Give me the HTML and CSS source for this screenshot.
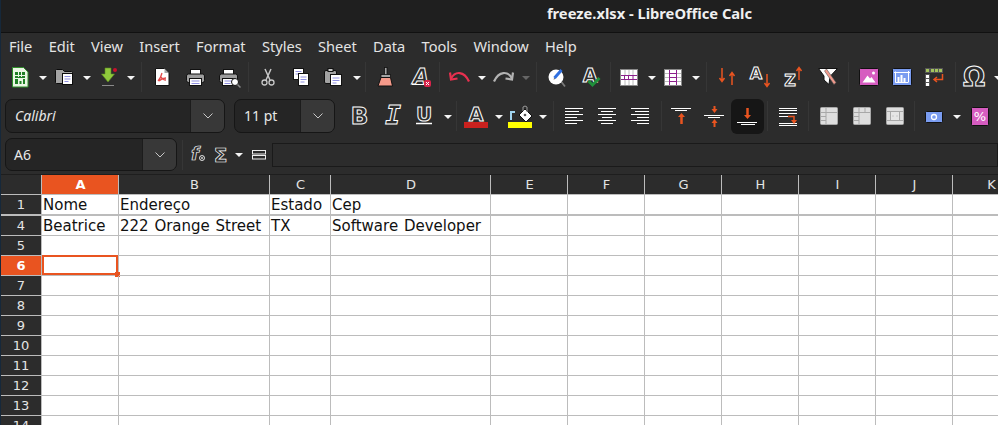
FILE: index.html
```html
<!DOCTYPE html>
<html lang="en">
<head>
  <meta charset="UTF-8">
  <meta name="viewport" content="width=device-width, initial-scale=1.0">
  <title>freeze.xlsx - LibreOffice Calc</title>
  <link rel="stylesheet" href="styles.css">
</head>
<body>

  <div class="titlebar">freeze.xlsx - LibreOffice Calc</div>

  <div class="menubar">
    <span>File</span><span>Edit</span><span>View</span><span>Insert</span><span>Format</span><span>Styles</span><span>Sheet</span><span>Data</span><span>Tools</span><span>Window</span><span>Help</span>
  </div>

  <!-- standard toolbar -->
  <div class="toolbar row1">
    <span class="btn"><svg class="ic" viewBox="0 0 33 26"><path d="M8.500 3.500h11l4.500 4.500v15h-15.500z" fill="#eaf6e4" stroke="#2f8f2a"/><rect x="11" y="8" width="10" height="12" fill="#1f7f24"/><path d="M11 11.500h10M11 14.500h10M14.500 8v5M17.500 8v5" stroke="#eaf6e4"/><rect x="14" y="15" width="5" height="5" fill="#eaf6e4"/><rect x="15.500" y="17" width="2" height="3" fill="#1f7f24"/></svg></span>
    <span class="drop"></span>
    <span class="btn"><svg class="ic" viewBox="0 0 33 26"><path d="M7.500 6.500q0-1 1-1h6l2 2h7q1 0 1 1v10q0 1-1 1h-15q-1 0-1-1z" fill="#a3a3a3" stroke="#0c0c0c"/><rect x="14.500" y="9.500" width="10" height="11" fill="#fff" stroke="#0c0c0c"/><path d="M16.500 12.500h6M16.500 15h6M16.500 17.500h4" stroke="#8f8fe0"/></svg></span>
    <span class="drop"></span>
    <span class="btn"><svg class="ic" viewBox="0 0 33 26"><path d="M13 4h6v6h3.500l-6.500 8-6.500-8h3.500z" fill="#8fc83c" stroke="#5c8a20" stroke-width=".6"/><path d="M10 21.500h12" stroke="#8a8a8a"/><circle cx="23" cy="6" r="2" fill="#c8102e"/></svg></span>
    <span class="drop"></span>
    <i class="sep wide"></i>
    <span class="btn"><svg class="ic" viewBox="0 0 33 26"><path d="M9.500 4.500h9l4.500 4.500v12.500h-13.500z" fill="#fff" stroke="#111"/><path d="M18.500 4.500v4.500h4.500z" fill="#a8a8a8"/><path d="M16 9c-1 4-3 7-4 8m3-4c1 2 3 3 5 3m-7 1c2-2 5-3 7-3" fill="none" stroke="#e34b4b" stroke-width="1.300"/></svg></span>
    <span class="btn"><svg class="ic" viewBox="0 0 33 26"><rect x="11.500" y="5.500" width="10" height="6" fill="#fff" stroke="#111"/><rect x="7.500" y="10" width="18" height="8.500" rx="2" fill="#9d9d9d" stroke="#111"/><rect x="10.500" y="14.500" width="12" height="7" fill="#fff" stroke="#111"/><path d="M12.500 17h8M12.500 19.500h8" stroke="#8f8fe0"/></svg></span>
    <span class="btn"><svg class="ic" viewBox="0 0 33 26"><rect x="11.500" y="5.500" width="10" height="6" fill="#fff" stroke="#111"/><rect x="7.500" y="10" width="18" height="8.500" rx="2" fill="#9d9d9d" stroke="#111"/><rect x="10.500" y="14.500" width="12" height="7" fill="#fff" stroke="#111"/><path d="M12.500 17h8M12.500 19.500h6" stroke="#8f8fe0"/><circle cx="23" cy="18" r="3.500" fill="#fff" stroke="#111"/><path d="M25.500 20.500l3 3" stroke="#8a8a8a" stroke-width="1.500"/></svg></span>
    <i class="sep"></i>
    <span class="btn"><svg class="ic" viewBox="0 0 33 26"><path d="M13 5l5 11M19 5l-5 11" stroke="#c8c8c8" stroke-width="1.500" fill="none"/><circle cx="12.500" cy="18.500" r="2.500" fill="none" stroke="#c8c8c8" stroke-width="1.300"/><circle cx="19.500" cy="18.500" r="2.500" fill="none" stroke="#c8c8c8" stroke-width="1.300"/></svg></span>
    <span class="btn"><svg class="ic" viewBox="0 0 33 26"><rect x="8.500" y="4.500" width="10" height="11" fill="#fff" stroke="#111"/><path d="M10.500 7.500h6M10.500 10h3" stroke="#8f8fe0"/><rect x="13.500" y="9.500" width="10" height="12" fill="#fff" stroke="#111"/><path d="M15.500 13h6M15.500 15.500h6M15.500 18h4" stroke="#8f8fe0"/></svg></span>
    <span class="btn"><svg class="ic" viewBox="0 0 33 26"><rect x="6.500" y="6.500" width="12" height="13" rx="1.500" fill="#a3a3a3" stroke="#111"/><rect x="10" y="4.500" width="5" height="3" fill="#c8c8c8" stroke="#111"/><rect x="12.500" y="10.500" width="11" height="11" fill="#fff" stroke="#111"/><path d="M14.500 14h7M14.500 16.500h7M14.500 19h4" stroke="#8f8fe0"/></svg></span>
    <span class="drop"></span>
    <i class="sep"></i>
    <span class="btn"><svg class="ic" viewBox="0 0 33 26"><rect x="15.500" y="3.500" width="2.500" height="8" fill="#a3a3a3" stroke="#111" stroke-width=".8"/><rect x="12" y="10.500" width="9.500" height="3" fill="#a3a3a3" stroke="#111" stroke-width=".8"/><path d="M12 13.500h9.500l2 8.500h-14.500z" fill="#f59a8a" stroke="#111"/></svg></span>
    <span class="btn"><svg class="ic" viewBox="0 0 33 26"><text class="ol ital" x="19" y="20" font-size="21">A</text><path d="M10 20.500h14" stroke="#fff"/><rect x="22" y="16" width="7" height="7" rx="2" fill="#d9234a"/><path d="M24 18l3 3m0-3l-3 3" stroke="#fff"/></svg></span>
    <i class="sep mid"></i>
    <span class="btn"><svg class="ic" viewBox="0 0 33 26"><path d="M8 14.500c4-7.500 13-8 18 3" fill="none" stroke="#e8304f" stroke-width="2.200"/><path d="M7 8.500l1 7 6.500-1" fill="none" stroke="#e8304f" stroke-width="2.200"/></svg></span>
    <span class="drop"></span>
    <span class="btn"><svg class="ic" viewBox="0 0 33 26"><path d="M25 14.500c-4-7.500-13-8-18 3" fill="none" stroke="#b3b3b3" stroke-width="2.200"/><path d="M26 8.500l-1 7-6.500-1" fill="none" stroke="#b3b3b3" stroke-width="2.200"/></svg></span>
    <span class="drop off"></span>
    <i class="sep wide"></i>
    <span class="btn"><svg class="ic" viewBox="0 0 33 26"><path d="M20.500 18l3.500 4.500" stroke="#7a7a7a" stroke-width="1.800"/><circle cx="15" cy="13" r="7.500" fill="#fff"/><path d="M13.500 14l7-8" stroke="#2f6fe0" stroke-width="3"/><path d="M12.500 15.500l.7-1.500 1 1z" fill="#333"/></svg></span>
    <span class="btn"><svg class="ic" viewBox="0 0 33 26"><text class="ol" x="16" y="18" font-size="19">A</text><path d="M14.500 17l4 4 7-7" fill="none" stroke="#1f8f3a" stroke-width="3"/></svg></span>
    <i class="sep narrow"></i>
    <span class="btn"><svg class="ic" viewBox="0 0 33 26"><rect x="7.500" y="5.500" width="17" height="16" fill="#fff" stroke="#8a8a8a"/><path d="M12 6v5M16 6v5M20 6v5M12 16v5M16 16v5M20 16v5" stroke="#bcbcbc"/><path d="M8 11.500h16M8 15.500h16M11.500 11v5M15.500 11v5M20 11v5" stroke="#8c1f8c"/></svg></span>
    <span class="drop"></span>
    <span class="btn"><svg class="ic" viewBox="0 0 33 26"><rect x="7.500" y="5.500" width="17" height="16" fill="#fff" stroke="#8a8a8a"/><path d="M8 9.500h16M8 13.500h16M8 17.500h16" stroke="#bcbcbc"/><path d="M12.500 6v15M19.500 6v15M13 9.500h6M13 13.500h6M13 17.500h6" stroke="#8c1f8c"/></svg></span>
    <span class="drop"></span>
    <i class="sep wide"></i>
    <span class="btn"><svg class="ic" viewBox="0 0 33 26"><path d="M11 4v13M8.500 14l2.500 3.500 2.500-3.500M21 21v-12M18.500 12l2.500-3.500 2.500 3.500" fill="none" stroke="#e95420" stroke-width="1.500"/></svg></span>
    <span class="btn"><svg class="ic" viewBox="0 0 33 26"><text class="ol" x="12" y="15" font-size="16">A</text><path d="M23 10v12M20.500 19l2.500 3.500 2.500-3.500" fill="none" stroke="#e95420" stroke-width="1.500"/></svg></span>
    <span class="btn"><svg class="ic" viewBox="0 0 33 26"><text class="ol" x="13" y="22" font-size="16">Z</text><path d="M22 16v-12M19.500 7l2.500-3.500 2.500 3.500" fill="none" stroke="#e95420" stroke-width="1.500"/></svg></span>
    <span class="btn"><svg class="ic" viewBox="0 0 33 26"><path d="M8.500 4.500h19l-7.500 8-1 8-5-4.500v-4z" fill="#fff" stroke="#111"/><path d="M14.500 7l2-2 9.500 13.500-2 2z" fill="#f09a8c" stroke="#555" stroke-width=".6"/></svg></span>
    <i class="sep wide"></i>
    <span class="btn"><svg class="ic" viewBox="0 0 33 26"><rect x="6.500" y="4.500" width="19" height="17" rx="1" fill="#d65cc0" stroke="#111"/><path d="M9.500 18.500l5-7 2.500 3 1.500-1.500 4 5.500z" fill="#fff"/><circle cx="20.500" cy="9" r="1.500" fill="#fff"/></svg></span>
    <span class="btn"><svg class="ic" viewBox="0 0 33 26"><rect x="6.500" y="4.500" width="19" height="17" rx="1" fill="#7a9cf0" stroke="#111"/><path d="M9.500 7.500v11h13M8 8.500h16M22.500 7v11" fill="none" stroke="#fff"/><path d="M12.500 18v-5M15.500 18v-7M18.500 18v-4" stroke="#fff" stroke-width="2"/></svg></span>
    <span class="btn"><svg class="ic" viewBox="0 0 33 26"><rect x="6" y="4" width="18" height="5" fill="#555"/><rect x="6" y="10" width="5" height="12" fill="#555"/><path d="M7 5h3v3h-3zM12 5h3v3h-3zM16 5h3v3h-3zM20 5h3v3h-3z" fill="#a4c45c"/><path d="M7 11h3v3h-3zM7 15h3v3h-3zM7 19h3v3h-3z" fill="#fff"/><path d="M23.500 10v5.500h-8M18 13l-3 2.500 3 2.500" fill="none" stroke="#e95420" stroke-width="1.500"/></svg></span>
    <i class="sep"></i>
    <span class="btn"><svg class="ic" viewBox="0 0 33 26"><text class="ol" x="15" y="22" font-size="26">Ω</text></svg></span>
    <span class="drop"></span>
  </div>

  <!-- formatting toolbar -->
  <div class="toolbar row2">
    <div class="combo font-box"><span class="combo-text ital">Calibri</span><span class="combo-arrow"><svg class="chev" viewBox="0 0 10 6"><path d="M.5.500l4.500 4.500 4.500-4.500" fill="none" stroke="#c8c8c8"/></svg></span></div>
    <div class="combo size-box"><span class="combo-text">11 pt</span><span class="combo-arrow"><svg class="chev" viewBox="0 0 10 6"><path d="M.5.500l4.500 4.500 4.500-4.500" fill="none" stroke="#c8c8c8"/></svg></span></div>
    <span class="btn"><svg class="ic" viewBox="0 0 33 26"><text class="ol" x="16.500" y="21" font-size="23">B</text></svg></span>
    <span class="btn"><svg class="ic" viewBox="0 0 33 26"><text class="ol mono ital" x="17" y="21" font-size="26">I</text></svg></span>
    <span class="btn"><svg class="ic" viewBox="0 0 33 26"><text class="ol" x="15" y="18" font-size="20">U</text><path d="M7 20.500h16" stroke="#fff" stroke-width="1.500"/></svg></span>
    <span class="drop"></span>
    <i class="sep"></i>
    <span class="btn"><svg class="ic" viewBox="0 0 33 26"><text class="ol" x="16" y="18" font-size="19">A</text><rect x="4" y="19" width="24" height="6" fill="#c9211e"/></svg></span>
    <span class="drop"></span>
    <span class="btn"><svg class="ic" viewBox="0 0 33 26"><rect x="4" y="19" width="24" height="6" fill="#ff0"/><path d="M7 17v-8h4" fill="none" stroke="#a0d4f0" stroke-width="2"/><path d="M21 6l7 7-6 6-7-7z" fill="#fff" stroke="#111"/><path d="M19 8v-4q2-2 4 0v5" fill="none" stroke="#9a9a9a"/><circle cx="21" cy="12" r="1.300" fill="#555"/></svg></span>
    <span class="drop"></span>
    <i class="sep wide"></i>
    <span class="btn"><svg class="ic" viewBox="0 0 33 26"><path d="M7 5.500h18M7 8.500h14M7 11.500h18M7 14.500h12M7 17.500h18M7 20.500h12" stroke="#fff"/></svg></span>
    <span class="btn"><svg class="ic" viewBox="0 0 33 26"><path d="M7 5.500h18M10 8.500h12M7 11.500h18M11 14.500h10M7 17.500h18M10 20.500h12" stroke="#fff"/></svg></span>
    <span class="btn"><svg class="ic" viewBox="0 0 33 26"><path d="M7 5.500h18M11 8.500h14M7 11.500h18M13 14.500h12M7 17.500h18M13 20.500h12" stroke="#fff"/></svg></span>
    <i class="sep mid"></i>
    <span class="btn"><svg class="ic" viewBox="0 0 33 26"><path d="M6 5.500h20M10 7.500h12" stroke="#fff"/><path d="M16.500 21v-9" stroke="#e95420" stroke-width="2.500"/><path d="M13 14l3.500-4 3.500 4z" fill="#e95420"/></svg></span>
    <span class="btn"><svg class="ic" viewBox="0 0 33 26"><path d="M6 12.500h20M10 14.500h12" stroke="#fff"/><path d="M16.500 3v4M16.500 19v5" stroke="#e95420" stroke-width="2"/><path d="M13.500 6h6l-3 4zM13.500 20h6l-3-4z" fill="#e95420"/></svg></span>
    <span class="btn on"><svg class="ic" viewBox="0 0 33 26"><path d="M6 19.500h20M10 21.500h14" stroke="#fff"/><path d="M16.500 5v7" stroke="#e95420" stroke-width="2.500"/><path d="M13 12h7l-3.500 4z" fill="#e95420"/></svg></span>
    <i class="sep"></i>
    <span class="btn"><svg class="ic" viewBox="0 0 33 26"><path d="M8 5.500h18M8 7.500h18M8 10.500h18M8 13.500h9M8 20.500h18M8 22.500h18" stroke="#fff"/><path d="M17 13.500h6v5" fill="none" stroke="#e95420" stroke-width="1.500"/><path d="M20 17h6l-3 4z" fill="#e95420"/></svg></span>
    <i class="sep mid"></i>
    <span class="btn"><svg class="ic" viewBox="0 0 33 26"><rect x="8.500" y="4.500" width="17" height="17" rx="1" fill="#dedede" stroke="#a8a8a8"/><path d="M9 9.500h16M14 5v16M9 13.500h5M9 17.500h5" stroke="#a8a8a8"/></svg></span>
    <span class="btn"><svg class="ic" viewBox="0 0 33 26"><rect x="8.500" y="4.500" width="17" height="17" rx="1" fill="#dedede" stroke="#a8a8a8"/><path d="M9 9.500h16M14 5v16M9 13.500h5M9 17.500h5M20 5v4" stroke="#a8a8a8"/></svg></span>
    <span class="btn"><svg class="ic" viewBox="0 0 33 26"><rect x="8.500" y="4.500" width="17" height="17" rx="1" fill="#dedede" stroke="#a8a8a8"/><rect x="12.500" y="8.500" width="9" height="9" fill="#e6e6e6" stroke="#a8a8a8"/><path d="M14.500 13h1M18.500 13h1M9 8.500h3M22 8.500h3M9 17.500h3M22 17.500h3" stroke="#a8a8a8"/></svg></span>
    <i class="sep"></i>
    <span class="btn"><svg class="ic" viewBox="0 0 33 26"><rect x="7.500" y="8.500" width="17" height="11" rx="1" fill="#7a9cf0" stroke="#111"/><circle cx="16" cy="14" r="2.500" fill="none" stroke="#fff" stroke-width="1.300"/></svg></span>
    <span class="drop"></span>
    <span class="btn"><svg class="ic" viewBox="0 0 33 26"><rect x="9.500" y="4.500" width="17" height="18" rx="1" fill="#d65cc0" stroke="#111"/><text class="pct" x="18" y="18" font-size="13">%</text></svg></span>
  </div>

  <!-- formula bar -->
  <div class="formulabar">
    <div class="combo name-box"><span class="combo-text">A6</span><span class="combo-arrow"><svg class="chev" viewBox="0 0 10 6"><path d="M.5.500l4.500 4.500 4.500-4.500" fill="none" stroke="#c8c8c8"/></svg></span></div>
    <i class="sep fsep"></i>
    <span class="fbtn"><svg class="ic-s" viewBox="0 0 23 26"><text class="ol thin ital" x="9" y="18" font-size="18">f</text><circle cx="16" cy="16" r="2.500" fill="none" stroke="#ddd"/><path d="M14.500 14.500l3 3m0-3l-3 3" stroke="#ddd" stroke-width=".7"/></svg></span>
    <span class="fbtn"><svg class="ic-s" viewBox="0 0 23 26"><text class="ol thin" x="11.500" y="20" font-size="20">Σ</text></svg></span>
    <span class="drop fdrop"></span>
    <span class="fbtn eq"><svg class="ic-s" viewBox="0 0 23 26"><rect x="5.500" y="8.500" width="13" height="3.500" fill="none" stroke="#eee"/><rect x="5.500" y="13.500" width="13" height="3.500" fill="none" stroke="#eee"/></svg></span>
    <div class="input"></div>
  </div>

  <!-- sheet -->
  <table class="sheet">
    <colgroup>
      <col class="c-rh"><col class="c-a"><col class="c-b"><col class="c-c"><col class="c-d">
      <col class="c-n"><col class="c-n"><col class="c-n"><col class="c-n"><col class="c-n"><col class="c-n"><col class="c-n">
    </colgroup>
    <tr class="head"><th></th><th class="cur">A</th><th>B</th><th>C</th><th>D</th><th>E</th><th>F</th><th>G</th><th>H</th><th>I</th><th>J</th><th>K</th></tr>
    <tr class="frozen"><th>1</th><td>Nome</td><td>Endereço</td><td>Estado</td><td>Cep</td><td></td><td></td><td></td><td></td><td></td><td></td><td></td></tr>
    <tr><th>4</th><td>Beatrice</td><td>222 Orange Street</td><td>TX</td><td>Software Developer</td><td></td><td></td><td></td><td></td><td></td><td></td><td></td></tr>
    <tr><th>5</th><td></td><td></td><td></td><td></td><td></td><td></td><td></td><td></td><td></td><td></td><td></td></tr>
    <tr><th class="cur">6</th><td class="selected"></td><td></td><td></td><td></td><td></td><td></td><td></td><td></td><td></td><td></td><td></td></tr>
    <tr><th>7</th><td></td><td></td><td></td><td></td><td></td><td></td><td></td><td></td><td></td><td></td><td></td></tr>
    <tr><th>8</th><td></td><td></td><td></td><td></td><td></td><td></td><td></td><td></td><td></td><td></td><td></td></tr>
    <tr><th>9</th><td></td><td></td><td></td><td></td><td></td><td></td><td></td><td></td><td></td><td></td><td></td></tr>
    <tr><th>10</th><td></td><td></td><td></td><td></td><td></td><td></td><td></td><td></td><td></td><td></td><td></td></tr>
    <tr><th>11</th><td></td><td></td><td></td><td></td><td></td><td></td><td></td><td></td><td></td><td></td><td></td></tr>
    <tr><th>12</th><td></td><td></td><td></td><td></td><td></td><td></td><td></td><td></td><td></td><td></td><td></td></tr>
    <tr><th>13</th><td></td><td></td><td></td><td></td><td></td><td></td><td></td><td></td><td></td><td></td><td></td></tr>
    <tr><th>14</th><td></td><td></td><td></td><td></td><td></td><td></td><td></td><td></td><td></td><td></td><td></td></tr>
  </table>

</body>
</html>
```

FILE: styles.css
```css
html, body {
  margin: 0;
  height: 425px;
  overflow: hidden;
}
body {
  font-family: "Noto Sans", sans-serif;
  background-color: #2c2c2c;
  color: #e8e8e8;
  border-left: 1px solid #16283a;
  box-sizing: border-box;
}
.titlebar {
  height: 32px;
  line-height: 27px;
  background-color: #1f1f1f;
  border-bottom: 1px solid #111;
  text-align: center;
  font-size: 14.7px;
  font-weight: 700;
  color: #f0f0f0;
  padding-left: 300px;
}
.menubar {
  height: 25px;
  display: flex;
  align-items: center;
  gap: 16.300px;
  padding-left: 8px;
  font-size: 14.6px;
  color: #e4e4e4;
}

.toolbar {
  display: flex;
  align-items: flex-start;
  box-sizing: border-box;
}
.row1 {
  height: 38px;
  padding: 2px 0 0 3px;
}
.row2 {
  height: 39px;
  padding: 3px 0 0 4px;
}
.btn {
  flex: none;
  width: 33px;
  height: 35px;
  padding-top: 4px;
  box-sizing: border-box;
  border-radius: 6px;
}
.btn.on {
  background-color: #161616;
}
.ic {
  display: block;
  width: 33px;
  height: 26px;
  overflow: visible;
}
.ic-s {
  display: block;
  width: 23px;
  height: 26px;
  overflow: visible;
}
.drop {
  flex: none;
  width: 11px;
  height: 35px;
  padding-top: 1px;
  box-sizing: border-box;
  display: flex;
  align-items: center;
  justify-content: center;
}
.drop::after {
  content: "";
  border-left: 4px solid transparent;
  border-right: 4px solid transparent;
  border-top: 4px solid #f4f4f4;
}
.drop.off::after {
  border-top-color: #666;
}
.sep {
  flex: none;
  width: 1px;
  height: 30px;
  margin: 2px 3px 0;
  background-color: #363636;
}
.sep.wide {
  margin-left: 5px;
  margin-right: 4px;
}
.sep.mid {
  margin-left: 4px;
}
.sep.narrow {
  margin-right: 2px;
}

/* outlined letters on the toolbar icons */
.ol {
  font-family: "DejaVu Sans", sans-serif;
  font-weight: 700;
  text-anchor: middle;
  fill: #2c2c2c;
  stroke: #fff;
  stroke-width: 1;
}
.ol.mono {
  font-family: "DejaVu Sans Mono", monospace;
}
.ol.thin {
  stroke-width: .7;
}
.ital {
  font-style: italic;
}
.pct {
  font-family: "DejaVu Sans", sans-serif;
  text-anchor: middle;
  fill: #fff;
}

.combo {
  flex: none;
  height: 34px;
  box-sizing: border-box;
  display: flex;
  background-color: #252525;
  border: 1px solid #161616;
  border-radius: 7px;
  overflow: hidden;
  font-size: 14px;
  color: #e8e8e8;
}
.combo-text {
  flex: 1;
  padding-left: 9px;
  line-height: 32px;
}
.combo-arrow {
  flex: none;
  width: 34px;
  display: flex;
  align-items: center;
  justify-content: center;
  background-color: #383838;
  border-left: 1px solid #1c1c1c;
  box-sizing: border-box;
}
.chev {
  width: 10px;
  height: 6px;
}
.font-box {
  width: 220px;
  margin-right: 9px;
}
.size-box {
  width: 101px;
  margin-right: 8px;
}

.formulabar {
  height: 39px;
  box-sizing: border-box;
  padding: 3px 0 0 4px;
  display: flex;
  align-items: flex-start;
}
.name-box {
  width: 172px;
  height: 33px;
}
.name-box .combo-text {
  padding-left: 8px;
}
.fsep {
  margin: 2px 3px 0 5px;
}
.fbtn {
  flex: none;
  width: 23px;
  padding-top: 4px;
}
.fbtn.eq {
  width: 27px;
  padding-left: 2px;
  box-sizing: border-box;
}
.fdrop {
  width: 13px;
  height: 33px;
}
.input {
  flex: 1;
  height: 24px;
  margin-top: 5px;
  background-color: #2c2c2c;
  border: 1px solid #1a1a1a;
  box-sizing: border-box;
}

table.sheet {
  table-layout: fixed;
  border-collapse: separate;
  border-spacing: 0;
  width: 1029px;
  background-color: #fff;
  border-top: 1px solid #1e1e1e;
}
.c-rh { width: 41px; }
.c-a { width: 77px; }
.c-b { width: 151px; }
.c-c { width: 61px; }
.c-d { width: 160px; }
.c-n { width: 77px; }
th, td {
  height: 20px;
  padding: 0;
  box-sizing: border-box;
  border-right: 1px solid #bcbcbc;
  border-bottom: 1px solid #bcbcbc;
  overflow: hidden;
  white-space: nowrap;
}
th {
  background-color: #2c2c2c;
  color: #e4e4e4;
  font-family: "DejaVu Sans", sans-serif;
  font-size: 13px;
  font-weight: 400;
  text-align: center;
}
.head th {
  padding-left: 1px;
}
th.cur {
  background-color: #e95420;
  color: #fff;
  font-weight: 700;
}
td {
  font-family: "DejaVu Sans", sans-serif;
  font-size: 15px;
  word-spacing: 1px;
  color: #111;
  padding-left: 1px;
  position: relative;
}
.frozen th, .frozen td {
  height: 21px;
  border-bottom-width: 2px;
}
td.selected {
  overflow: visible;
}
td.selected::before {
  content: "";
  position: absolute;
  left: 0;
  top: -1px;
  right: 0;
  bottom: 0;
  border: 2px solid #e95420;
}
td.selected::after {
  content: "";
  position: absolute;
  right: -2px;
  bottom: -2px;
  width: 5px;
  height: 5px;
  background-color: #e95420;
}
```
